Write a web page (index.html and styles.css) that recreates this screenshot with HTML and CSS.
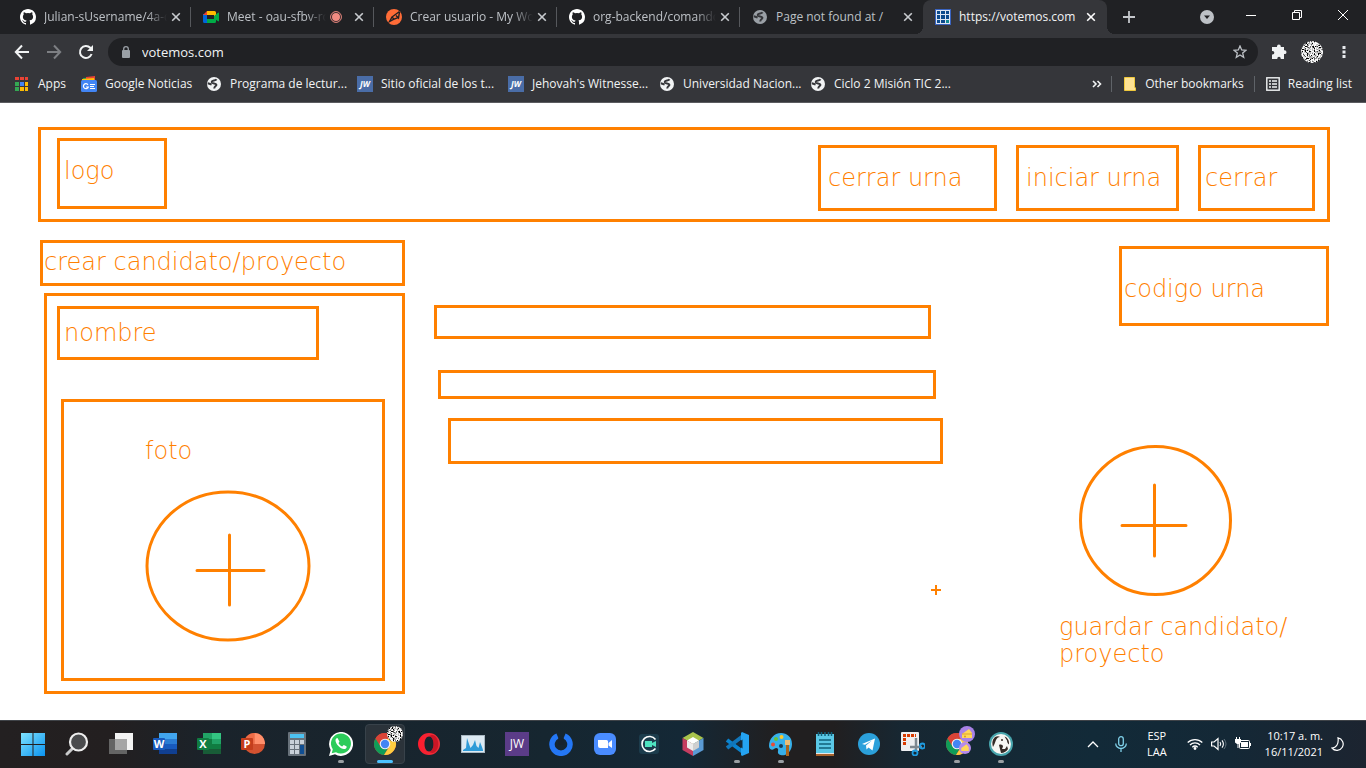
FILE: index.html
```html
<!DOCTYPE html>
<html lang="es">
<head>
<meta charset="utf-8">
<meta name="viewport" content="width=device-width, initial-scale=1">
<title>https://votemos.com</title>
<link rel="stylesheet" href="styles.css">
</head>
<body>
<svg class="defs" aria-hidden="true">
  <defs>
    <filter id="noise" x="0" y="0" width="1" height="1">
      <feTurbulence type="fractalNoise" baseFrequency="0.75" numOctaves="2" seed="4"/>
      <feColorMatrix values="4 0 0 0 -1.4  4 0 0 0 -1.4  4 0 0 0 -1.4  0 0 0 0 1"/>
      <feComposite in2="SourceGraphic" operator="in"/>
    </filter>
    <linearGradient id="winBlue" x1="0" y1="0" x2="1" y2="1"><stop offset="0" stop-color="#7fe3ff"/><stop offset="1" stop-color="#0a93f0"/></linearGradient>
    <linearGradient id="operaRed" x1="0" y1="0" x2="1" y2="0"><stop offset="0" stop-color="#ff1b2d"/><stop offset="1" stop-color="#e8303a"/></linearGradient>
    <symbol id="github" viewBox="0 0 16 16"><path fill="#fff" d="M8 0C3.58 0 0 3.58 0 8c0 3.54 2.29 6.53 5.47 7.59.4.07.55-.17.55-.38v-1.33c-2.23.48-2.7-1.07-2.7-1.07-.36-.92-.89-1.17-.89-1.17-.73-.5.05-.49.05-.49.8.06 1.23.83 1.23.83.71 1.22 1.87.87 2.33.66.07-.52.28-.87.5-1.07-1.77-.2-3.64-.89-3.64-3.95 0-.87.31-1.59.82-2.15-.08-.2-.36-1.01.08-2.12 0 0 .67-.21 2.2.82a7.6 7.6 0 0 1 4 0c1.53-1.04 2.2-.82 2.2-.82.44 1.1.16 1.92.08 2.12.51.56.82 1.27.82 2.15 0 3.07-1.87 3.75-3.65 3.95.29.25.54.73.54 1.48v2.19c0 .21.15.46.55.38A8 8 0 0 0 16 8c0-4.42-3.58-8-8-8z"/></symbol>
    <symbol id="globe" viewBox="0 0 16 16"><circle cx="8" cy="8" r="7" fill="currentColor"/><path class="globe-land" d="M10.500 3.200C9.500 5 5.500 3.800 5.800 6.200 6.200 8 10 6.800 10.400 8.700c.2 1.500-1.900 1.200-2.200 3.800"/><path class="globe-land" d="M1.800 7.200l3.800 1.300"/></symbol>
    <symbol id="jw" viewBox="0 0 16 16"><rect width="16" height="16" fill="#4a6da7"/><text x="8" y="11" text-anchor="middle" class="jw-small">JW</text></symbol>
    <symbol id="close" viewBox="0 0 10 10"><path d="M1.200 1.200l7.600 7.600M8.800 1.200L1.200 8.800" stroke="currentColor" stroke-width="1.600"/></symbol>
    <symbol id="chrome" viewBox="0 0 24 24"><circle cx="12" cy="12" r="11" fill="#db4437"/><path fill="#0f9d58" d="M2.500 6.500A11 11 0 0 0 11 23l5-8.500-4 2-4.500-2z"/><path fill="#ffcd40" d="M12 6.800h9.700A11 11 0 0 1 11 23l5.500-8.500z"/><path fill="#db4437" d="M2.500 6.500A11 11 0 0 1 21.700 6.800H12l-4.700 3z"/><circle cx="12" cy="12" r="5.300" fill="#f1f1f1"/><circle cx="12" cy="12" r="4.200" fill="#4285f4"/></symbol>
  </defs>
</svg>

<header class="browser">
  <div class="tabs">
    <button class="tab"><svg width="16" height="16"><use href="#github"/></svg><span class="tab-title">Julian-sUsername/4a-d</span><svg class="tab-close" width="10" height="10"><use href="#close"/></svg></button>
    <button class="tab"><svg width="16" height="16" viewBox="0 0 16 16"><path fill="#0066da" d="M0 5h4v9H1.500A1.500 1.500 0 0 1 0 12.500z"/><path fill="#e94235" d="M0 6l4-4v4z"/><path fill="#ffba00" d="M4 2h7.500A1.500 1.500 0 0 1 13 3.500V7l-2 1V6H4z"/><path fill="#00ac47" d="M4 10h7V7l4-3.300c.400-.3 1 0 1 .5v7.600c0 .5-.6.800-1 .5l-2-1.600v1.800a1.500 1.500 0 0 1-1.500 1.500H4z"/></svg><span class="tab-title">Meet - oau-sfbv-ro</span><svg class="recording" width="12" height="12" viewBox="0 0 12 12"><circle cx="6" cy="6" r="5.400" fill="none" stroke="#f28b82"/><circle cx="6" cy="6" r="4" fill="#f28b82"/></svg><svg class="tab-close" width="10" height="10"><use href="#close"/></svg></button>
    <button class="tab"><svg width="16" height="16" viewBox="0 0 16 16"><circle cx="8" cy="8" r="8" fill="#ff6c37"/><path d="M13.500 2.500L6 8l2 2.200 4-1.500M6 8l-2.500 4.500L8 10.200M10 6.500L12.500 9l1-6" fill="none" stroke="#202124" stroke-width="1.400"/></svg><span class="tab-title">Crear usuario - My Wo</span><svg class="tab-close" width="10" height="10"><use href="#close"/></svg></button>
    <button class="tab"><svg width="16" height="16"><use href="#github"/></svg><span class="tab-title">org-backend/comando</span><svg class="tab-close" width="10" height="10"><use href="#close"/></svg></button>
    <button class="tab tab-last"><svg class="globe-gray" width="16" height="16"><use href="#globe"/></svg><span class="tab-title">Page not found at /</span><svg class="tab-close" width="10" height="10"><use href="#close"/></svg></button>
    <button class="tab tab-active"><svg width="16" height="16" viewBox="0 0 16 16"><rect x=".5" y=".5" width="15" height="15" fill="#dfe6f2" stroke="#3a64c0"/><path fill="#0c4a8c" d="M2 2h3v3H2zM6 2h4v3H6zM11 2h3v3h-3zM2 6h3v4H2zM6 6h4v4H6zM11 6h3v4h-3zM2 11h3v3H2zM6 11h4v3H6z"/><path fill="#128a94" d="M11 11h3v3h-3z"/></svg><span class="tab-title">https://votemos.com</span><svg class="tab-close" width="10" height="10"><use href="#close"/></svg></button>
    <button class="new-tab" aria-label="New tab"><svg width="12" height="12" viewBox="0 0 12 12"><path d="M6 0v12M0 6h12" stroke="#c4c7cb" stroke-width="1.800"/></svg></button>
    <div class="window-controls">
      <button aria-label="Search tabs"><svg width="14" height="14" viewBox="0 0 14 14"><circle cx="7" cy="7" r="7" fill="#bdc1c6"/><path d="M4 5.500h6L7 9z" fill="#202124"/></svg></button>
      <button aria-label="Minimize"><svg width="10" height="10" viewBox="0 0 10 10"><path d="M0 5.500h10" stroke="#fff"/></svg></button>
      <button aria-label="Restore"><svg width="10" height="10" viewBox="0 0 10 10"><path d="M.5 2.500h7v7h-7zM2.500 2.500v-2h7v7h-2" fill="none" stroke="#fff"/></svg></button>
      <button aria-label="Close"><svg width="10" height="10" viewBox="0 0 10 10"><path d="M0 0l10 10M10 0L0 10" stroke="#fff"/></svg></button>
    </div>
  </div>

  <div class="toolbar">
    <button class="nav-btn" aria-label="Back"><svg width="16" height="16" viewBox="0 0 16 16"><path d="M15 8H2M8 1.500L1.800 8 8 14.500" fill="none" stroke="#f1f3f4" stroke-width="2"/></svg></button>
    <button class="nav-btn" aria-label="Forward"><svg width="16" height="16" viewBox="0 0 16 16"><path d="M1 8h13M8 1.500L14.200 8 8 14.500" fill="none" stroke="#7d7f83" stroke-width="2"/></svg></button>
    <button class="nav-btn" aria-label="Reload"><svg width="16" height="16" viewBox="0 0 16 16"><path d="M13.600 10A6 6 0 1 1 12.300 3.800L14 5.500" fill="none" stroke="#f1f3f4" stroke-width="2"/><path d="M15 1v6H9z" fill="#f1f3f4"/></svg></button>
    <div class="omnibox">
      <svg width="10" height="12" viewBox="0 0 10 12"><rect x="1" y="4" width="8" height="8" rx="1" fill="#9aa0a6"/><path d="M2.700 5V3a2.300 2.300 0 0 1 4.600 0v2" fill="none" stroke="#9aa0a6" stroke-width="1.300"/></svg>
      <input class="address" type="text" value="votemos.com" aria-label="Address">
      <svg width="14" height="14" viewBox="0 0 14 14"><path d="M7 1l1.700 4 4.300.3-3.300 2.800 1 4.200L7 10l-3.700 2.300 1-4.200L1 5.300 5.300 5z" fill="none" stroke="#bdc1c6" stroke-width="1.300"/></svg>
    </div>
    <div class="tools">
      <button aria-label="Extensions"><svg width="16" height="16" viewBox="0 0 16 16"><path fill="#f1f3f4" d="M6 2.500a1.900 1.900 0 0 1 3.800 0V3H13v3.300h.6a1.900 1.900 0 0 1 0 3.800H13V15H9.700v-.6a1.700 1.700 0 0 0-3.400 0v.6H1v-4.500h.6a1.700 1.700 0 0 0 0-3.500H1V3h5z"/></svg></button>
      <button aria-label="Profile"><svg width="22" height="22" viewBox="0 0 22 22"><circle cx="11" cy="11" r="11" filter="url(#noise)"/></svg></button>
      <button aria-label="Menu"><svg width="4" height="14" viewBox="0 0 4 14"><path fill="#e8eaed" d="M.5 1h3v3h-3zM.5 5.500h3v3h-3zM.5 10h3v3h-3z"/></svg></button>
    </div>
  </div>

  <nav class="bookmarks">
    <a class="bookmark bm-apps" href="#"><svg width="16" height="16" viewBox="0 0 16 16"><path fill="#ea4335" d="M1 1h4v3H1zM6 1h4v3H6zM11 1h3v3h-3z"/><path fill="#34a853" d="M1 6h4v4H1zM1 11h4v4H1z"/><path fill="#4285f4" d="M6 6h4v4H6z"/><path fill="#fbbc04" d="M11 6h3v4h-3zM6 11h4v4H6zM11 11h3v4h-3z"/></svg>Apps</a>
    <a class="bookmark bm-news" href="#"><svg width="16" height="16" viewBox="0 0 16 16"><path fill="#0c9d58" d="M2 2l10-1 2 3H2z"/><path fill="#ea4335" d="M5 1l9-1v4H5z"/><path fill="#ffc107" d="M1 3l12-1 1 4H1z"/><rect y="4" width="16" height="12" rx="1.500" fill="#4285f4"/><path d="M7 8.800A2.500 2.500 0 1 0 7.300 11H5M9 8.500h5M9 10.500h4M9 12.500h5" fill="none" stroke="#fff" stroke-width="1.200"/></svg>Google Noticias</a>
    <a class="bookmark" href="#"><svg width="16" height="16"><use href="#globe"/></svg>Programa de lectur...</a>
    <a class="bookmark" href="#"><svg width="16" height="16"><use href="#jw"/></svg>Sitio oficial de los t...</a>
    <a class="bookmark" href="#"><svg width="16" height="16"><use href="#jw"/></svg>Jehovah's Witnesse...</a>
    <a class="bookmark" href="#"><svg width="16" height="16"><use href="#globe"/></svg>Universidad Nacion...</a>
    <a class="bookmark" href="#"><svg width="16" height="16"><use href="#globe"/></svg>Ciclo 2 Misión TIC 2...</a>
    <button class="more" aria-label="More bookmarks"><svg width="10" height="8" viewBox="0 0 10 8"><path d="M1 1l3 3-3 3M5.500 1l3 3-3 3" fill="none" stroke="#f1f3f4" stroke-width="1.600"/></svg></button>
    <a class="bookmark bm-other" href="#"><svg width="14" height="16" viewBox="0 0 14 16"><path fill="#fde293" stroke="#f0c93c" d="M1.500 1.500h10V11l1 1v2.500h-11z"/></svg>Other bookmarks</a>
    <a class="bookmark bm-reading" href="#"><svg width="14" height="14" viewBox="0 0 14 14"><rect x=".8" y=".8" width="12.400" height="12.400" fill="none" stroke="#f1f3f4" stroke-width="1.400"/><path d="M3 4h2M3 7h2M3 10h2M6 4h5M6 7h5M6 10h5" stroke="#f1f3f4" stroke-width="1.600"/></svg>Reading list</a>
  </nav>
</header>

<main class="page">
  <header class="site-header box">
    <a class="logo box" href="#">logo</a>
    <nav class="actions">
      <button class="box btn-end">cerrar urna</button>
      <button class="box btn-start">iniciar urna</button>
      <button class="box btn-exit">cerrar</button>
    </nav>
  </header>
  <div class="columns">
    <section class="create">
      <button class="box create-title">crear candidato/proyecto</button>
      <form class="box create-form">
        <input class="box name" type="text" placeholder="nombre" aria-label="nombre">
        <button class="box photo" type="button">
          <span>foto</span>
          <svg class="sketch" width="166" height="152" viewBox="0 0 166 152"><ellipse cx="83" cy="76" rx="81" ry="74"/><path d="M84.500 45v70M52 80.500h67"/></svg>
        </button>
      </form>
    </section>
    <section class="candidates">
      <div class="box row-one"></div>
      <div class="box row-two"></div>
      <div class="box row-three"></div>
      <svg class="cursor" width="10" height="10" viewBox="0 0 10 10"><path d="M5 0v10M0 5h10"/></svg>
    </section>
    <section class="side">
      <button class="box code">codigo urna</button>
      <button class="save">
        <svg class="sketch" width="153" height="152" viewBox="0 0 153 152"><ellipse cx="76.500" cy="75.500" rx="75" ry="74"/><path d="M75.500 40v71M43 80.500h64"/></svg>
        <span>guardar candidato/<br>proyecto</span>
      </button>
    </section>
  </div>
</main>

<footer class="taskbar">
  <div class="apps">
    <button class="app" aria-label="Inicio"><svg viewBox="0 0 24 24"><path fill="url(#winBlue)" d="M0 1h11.500v11H0zM12.500 1H24v11H12.500zM0 13h11.500v11H0zM12.500 13H24v11H12.500z"/></svg></button>
    <button class="app" aria-label="Buscar"><svg viewBox="0 0 24 24"><path d="M8 16l-6 6" stroke="#c9cacb" stroke-width="3" stroke-linecap="round"/><circle cx="13.500" cy="10" r="8.500" fill="#4a4b4d" stroke="#eee" stroke-width="2.200"/></svg></button>
    <button class="app" aria-label="Vista de tareas"><svg viewBox="0 0 24 24"><rect x="6" y="1" width="18" height="17" fill="#f3f3f3"/><rect y="7" width="18" height="15" fill="#646464"/><rect x="6" y="7" width="12" height="11" fill="#a5a5a5"/></svg></button>
    <button class="app" aria-label="Word"><svg viewBox="0 0 24 24"><path fill="#41a5ee" d="M6 1h18v6H6z"/><path fill="#2b7cd3" d="M6 7h18v5H6z"/><path fill="#185abd" d="M6 12h18v5H6z"/><path fill="#103f91" d="M6 17h18v5H6z"/><rect y="6" width="12" height="12" rx="1" fill="#185abd"/><text x="6" y="16" class="office">W</text></svg></button>
    <button class="app" aria-label="Excel"><svg viewBox="0 0 24 24"><path fill="#21a366" d="M6 1h9v6H6z"/><path fill="#33c481" d="M15 1h9v6h-9z"/><path fill="#107c41" d="M6 7h9v10H6z"/><path fill="#21a366" d="M15 7h9v5h-9z"/><path fill="#107c41" d="M15 12h9v5h-9z"/><path fill="#185c37" d="M6 17h18v5H6z"/><rect y="6" width="12" height="12" rx="1" fill="#107c41"/><text x="6" y="16" class="office">X</text></svg></button>
    <button class="app" aria-label="PowerPoint"><svg viewBox="0 0 24 24"><circle cx="13.500" cy="11.500" r="10.500" fill="#d35230"/><path fill="#ed6c47" d="M13.500 1v11H3A10.500 10.500 0 0 1 13.500 1z"/><path fill="#ff8f6b" d="M13.500 1A10.500 10.500 0 0 1 24 12H13.500z"/><rect y="6" width="12" height="12" rx="1" fill="#c43e1c"/><text x="6" y="16" class="office">P</text></svg></button>
    <button class="app" aria-label="Calculadora"><svg viewBox="0 0 24 24"><rect x="3" width="18" height="24" rx="1" fill="#68727b"/><rect x="5" y="2" width="14" height="4" fill="#4cc2f1"/><path fill="#c9d1d9" d="M5 8h4v4H5zM10 8h4v4h-4zM15 8h4v4h-4zM5 13h4v4H5zM10 13h4v4h-4zM5 18h4v4H5zM10 18h4v4h-4z"/><path fill="#104f93" d="M15 13h4v9h-4z"/></svg></button>
    <button class="app running" aria-label="WhatsApp"><svg viewBox="0 0 24 24"><path fill="#fff" d="M0 24l1.700-6A12 12 0 1 1 6 22.300z"/><path fill="#2ccc5a" d="M2.700 21.300l1.100-4A10 10 0 1 1 7 20.200z"/><path fill="#fff" d="M8.500 6c-1.200 0-2 1-2 2.500 0 3.500 5 8.500 8.500 8.500 1.500 0 2.700-.9 2.700-2.300 0-.500-2.700-1.700-3-1.700l-1.500 1.500c-1.500-.5-3.300-2.300-3.700-3.500l1-1.300z"/></svg></button>
    <button class="app current" aria-label="Chrome"><svg viewBox="0 0 24 24"><use href="#chrome" width="24" height="24"/></svg><svg class="app-badge" viewBox="0 0 16 16"><circle cx="8" cy="8" r="8" filter="url(#noise)"/></svg></button>
    <button class="app" aria-label="Opera"><svg viewBox="0 0 24 24"><path fill="url(#operaRed)" fill-rule="evenodd" d="M12 1a11 11 0 1 0 0 22 11 11 0 0 0 0-22zm0 3.500c2.800 0 4.500 3.300 4.500 7.500s-1.700 7.500-4.500 7.500S7.500 16.200 7.500 12 9.200 4.500 12 4.500z"/><path fill="#a70014" d="M12 4.500c1.500-1.500 4-2 6-.5 4.500 4 4.500 12 0 16-2 1.500-4.500 1-6-.5 2.800 0 4.500-3.300 4.500-7.500S14.800 4.500 12 4.500z" opacity=".5"/></svg></button>
    <button class="app" aria-label="Rendimiento"><svg viewBox="0 0 24 24"><rect x=".5" y="3.500" width="23" height="17" fill="#dceaf3" stroke="#a9b8c2"/><path fill="#2f9bd7" d="M2 18l3-2 1-10 2 6 1.500 4L12 13l2-5 1.500 6 2 2 1.500-6 2 5 1 3v1H2z"/></svg></button>
    <button class="app" aria-label="JW Library"><svg viewBox="0 0 24 24"><rect width="24" height="24" fill="#5b3c88"/><text x="12" y="16" class="jw-large">JW</text></svg></button>
    <button class="app" aria-label="Pomodoro"><svg viewBox="0 0 24 24"><path d="M8.500 4a9 9 0 1 0 7 0" fill="none" stroke="#2477f5" stroke-width="5.500"/><path d="M12 6v7" stroke="#17232d" stroke-width="5"/></svg></button>
    <button class="app" aria-label="Zoom"><svg viewBox="0 0 24 24"><rect x="1" y="1" width="22" height="22" rx="6" fill="#4a8cff"/><path fill="#fff" d="M5 8h8.500A1.500 1.500 0 0 1 15 9.500V16H7a2 2 0 0 1-2-2zM15.500 11L19 8v8l-3.500-2.500z"/></svg></button>
    <button class="app" aria-label="Grabadora"><svg viewBox="0 0 24 24"><rect x="2" y="2" width="20" height="20" rx="3" fill="#1c3c4c"/><path d="M18.500 7.500a7.500 7.500 0 1 0 0 9" fill="none" stroke="#fff" stroke-width="1.600"/><path fill="#4fe3c0" d="M8 9h7v6H8zM15 11l4-2v6l-4-2z"/></svg></button>
    <button class="app" aria-label="NetBeans"><svg viewBox="0 0 24 24"><path fill="#a9c44c" d="M12 0l10.500 6L12 12 1.500 6z"/><path fill="#c53d60" d="M1.500 6L12 12v12L1.500 18z"/><path fill="#5b9bd5" d="M22.500 6L12 12v12l10.500-6z"/><path fill="#fff" d="M12 5l6 3.500L12 12 6 8.500z"/><path fill="#ececec" d="M6 8.500l6 3.500v7l-6-3.500z"/><path fill="#cfcfcf" d="M18 8.500L12 12v7l6-3.500z"/></svg></button>
    <button class="app running" aria-label="Visual Studio Code"><svg viewBox="0 0 24 24"><path d="M2 8l16 12" stroke="#0a84d0" stroke-width="4"/><path d="M2 16L18 4" stroke="#1177bb" stroke-width="4"/><path fill="#24a3f2" d="M17 0l7 3v18l-7 3-1-1V1z"/><path fill="#15293a" d="M17.500 7.500v9L11.500 12z"/></svg></button>
    <button class="app running" aria-label="Paint"><svg viewBox="0 0 24 24"><path fill="#37b0ea" d="M12 1C5 1 0 7 0 14c0 3 3 5 5 3s5-1 4 2c-1 4 4 5 7 4 5-2 7-7 7-11C23 5 18 1 12 1z"/><circle cx="4" cy="12.500" r="2" fill="#e94b35"/><circle cx="7" cy="7" r="2" fill="#67c23a"/><circle cx="12.500" cy="5" r="2" fill="#ffc928"/><circle cx="12" cy="14" r="2" fill="#183a52"/><path fill="#e9bd78" d="M16 8h5v5h-5z"/><path fill="#a9651e" d="M17 13h3v11h-3z"/></svg></button>
    <button class="app" aria-label="Bloc de notas"><svg viewBox="0 0 24 24"><rect x="3" y="2" width="18" height="20" fill="#5ac8e6"/><path fill="#e8e8e8" d="M3 21h18v1H3z"/><path fill="#a8632d" d="M3 22h18v2H3z"/><path d="M5.500 0v4M8.500 0v4M12 0v4M15.500 0v4M18.500 0v4M6 8h12M6 12h12M6 16h12" stroke="#11607b" stroke-width="1.500"/></svg></button>
    <button class="app" aria-label="Telegram"><svg viewBox="0 0 24 24"><circle cx="12" cy="12" r="11" fill="#2ba0da"/><path fill="#fff" d="M5 12l13-5.500-2.500 12-4-3-2 2-.500-4 6-5-7 4.200z"/></svg></button>
    <button class="app" aria-label="Recortes"><svg viewBox="0 0 24 24"><rect width="18" height="19" rx="1" fill="#eef0f2"/><path d="M3.500 13V3.500H15" fill="none" stroke="#d83b01" stroke-width="3" stroke-dasharray="3 1"/><path d="M15 6v14M9 15h12" stroke="#7d8890" stroke-width="2.500"/><circle cx="14" cy="21" r="2.500" fill="none" stroke="#1e9be0" stroke-width="1.800"/><circle cx="21.500" cy="14" r="2.500" fill="none" stroke="#1e9be0" stroke-width="1.800"/></svg></button>
    <button class="app running" aria-label="Chrome, perfil 2"><svg viewBox="0 0 24 24"><use href="#chrome" width="24" height="24"/></svg><svg class="app-badge" viewBox="0 0 16 16"><circle cx="8" cy="8" r="8" fill="#a982e6"/><path fill="#ffd75a" d="M3 8l7-5 3 4v5H3z"/><path d="M3 8h10" stroke="#e0a528"/><circle cx="6" cy="10.500" r="1" fill="#d99a20"/></svg><svg class="app-badge app-badge-low" viewBox="0 0 16 16"><circle cx="8" cy="8" r="8" fill="#b58aec"/><path fill="#ffd75a" d="M3 8l7-5 3 4v5H3z"/></svg></button>
    <button class="app running" aria-label="DBeaver"><svg viewBox="0 0 24 24"><circle cx="12" cy="12" r="12" fill="#48a5ad"/><circle cx="12" cy="12" r="10" fill="#f8f7f4"/><path fill="#342a26" d="M6 5c2-1 4-1 5 0-2 0-3 1-4 3-1 3-2 5-3 7-1-4-1-7 2-10zM15.500 4.500c3 1 5 4 4.500 8-1-1-2-2-2-4zM10 13c2-1 4 0 4 1.500L13 17h3l2-3 1 3c-1 2-4 4-7 4l-1-4z"/><circle cx="13" cy="8" r="1" fill="#342a26"/></svg></button>
  </div>
  <div class="tray">
    <svg width="12" height="8" viewBox="0 0 12 8"><path d="M1 7l5-5 5 5" fill="none" stroke="#fff" stroke-width="1.300"/></svg>
    <svg class="mic" width="12" height="16" viewBox="0 0 12 16"><rect x="3.700" y=".7" width="4.600" height="9" rx="2.300"/><path d="M.7 7.500a5.300 5 0 0 0 10.600 0M6 12.500V16"/></svg>
    <div class="lang">ESP<br>LAA</div>
    <svg width="16" height="12" viewBox="0 0 16 12"><path d="M.7 4.500a10.500 10.500 0 0 1 14.600 0M3 7a7 7 0 0 1 10 0M5.300 9.200a4 4 0 0 1 5.400 0" fill="none" stroke="#fff" stroke-width="1.300"/><circle cx="8" cy="10.500" r="1.400" fill="#fff"/></svg>
    <svg width="16" height="14" viewBox="0 0 16 14"><path d="M.6 5v4h2.500L7 12.500v-11L3.100 5z" fill="none" stroke="#fff" stroke-width="1.200"/><path d="M9 5q1.500 2 0 4M11 3.300q2.800 3.700 0 7.400" fill="none" stroke="#fff" stroke-width="1.100"/><path d="M13 2q4 5 0 10" fill="none" stroke="#60717c"/></svg>
    <svg width="16" height="14" viewBox="0 0 16 14"><rect x="4.500" y="3.500" width="10" height="8" rx="1" fill="none" stroke="#fff"/><path d="M6 5h7v5H6zM15 6h1v3h-1zM0 2h6v3.500L4 7H2L0 5.500zM1 0h1v2H1zM4 0h1v2H4zM2.500 7h1v4h-1z" fill="#fff"/></svg>
    <time class="clock">10:17 a. m.<br>16/11/2021</time>
    <svg width="14" height="14" viewBox="0 0 14 14"><path d="M7 .8a6.300 6.300 0 1 1-6 10.200C5 11 8 7 7 .8z" fill="none" stroke="#fff" stroke-width="1.200"/></svg>
  </div>
</footer>
</body>
</html>
```
FILE: styles.css
```css
* { box-sizing: border-box; }

body {
  margin: 0;
  min-height: 100vh;
  display: flex;
  flex-direction: column;
  background: #fff;
  font: 12px/16px "Open Sans", "Noto Sans", sans-serif;
}

button, input {
  margin: 0;
  padding: 0;
  border: 0;
  background: none;
  color: inherit;
  font: inherit;
  text-align: left;
}

a { color: inherit; text-decoration: none; }
svg { display: block; flex: none; }
.defs { position: absolute; width: 0; height: 0; }

/* Browser chrome */
.browser {
  background: #35363a;
  color: #f1f3f4;
  border-bottom: 1px solid #5b5c60;
}

.tabs {
  display: flex;
  height: 34px;
  padding-left: 8px;
  background: #202124;
}

.tab {
  position: relative;
  display: flex;
  align-items: center;
  gap: 8px;
  flex: 0 1 183px;
  min-width: 0;
  padding: 0 10px 0 12px;
  color: #bdc1c6;
}

.tab::after {
  content: "";
  position: absolute;
  right: 0;
  top: 7px;
  width: 1px;
  height: 20px;
  background: #56585c;
}

.tab-title {
  flex: 1;
  min-width: 0;
  margin-right: -4px;
  overflow: hidden;
  white-space: nowrap;
  mask-image: linear-gradient(to right, #000 calc(100% - 20px), transparent);
}

.tab-close { color: #c8cbcf; }
.tab-last::after { display: none; }
.tab-last .tab-title, .tab-active .tab-title { mask-image: none; }

.tab-active {
  flex-basis: 184px;
  padding-right: 11px;
  background: #35363a;
  color: #f1f3f4;
  border-radius: 8px 8px 0 0;
}

.tab-active .tab-close { color: #fff; }

.tab-active::before, .tab-active::after {
  content: "";
  position: absolute;
  top: auto;
  bottom: 0;
  width: 8px;
  height: 8px;
}

.tab-active::before {
  left: -8px;
  background: radial-gradient(circle at 0 0, #202124 8px, #35363a 8px);
}

.tab-active::after {
  right: -8px;
  background: radial-gradient(circle at 100% 0, #202124 8px, #35363a 8px);
}

.recording { margin-right: 4px; }

.new-tab { padding: 0 16px; }

.window-controls {
  display: flex;
  align-items: center;
  margin-left: auto;
  height: 30px;
}

.window-controls button {
  display: flex;
  justify-content: center;
  width: 46px;
}

.window-controls button:first-child { width: 42px; padding-top: 4px; }

.toolbar {
  display: flex;
  align-items: center;
  height: 36px;
  padding: 0 14px 0 6px;
}

.nav-btn {
  display: flex;
  justify-content: center;
  width: 32px;
}

.omnibox {
  display: flex;
  align-items: center;
  flex: 1;
  gap: 11px;
  height: 28px;
  margin-left: 6px;
  padding: 0 11px 0 13px;
  border-radius: 14px;
  background: #202124;
}

.address { flex: 1; font-size: 13px; }

.tools {
  display: flex;
  align-items: center;
  gap: 14px;
  width: 94px;
  padding-left: 13px;
}

.tools button:last-child { margin-left: 5px; }

.bookmarks {
  display: flex;
  align-items: center;
  height: 32px;
  padding: 0 14px 4px;
}

.bookmark {
  display: flex;
  align-items: center;
  gap: 8px;
  flex: 0 0 151px;
  white-space: nowrap;
}

.bm-apps { flex-basis: 67px; }
.bm-news { flex-basis: 125px; }
.more { margin: 0 9px 0 auto; }

.bm-other, .bm-reading {
  flex: 0 0 auto;
  padding-left: 11px;
  border-left: 1px solid #5f6368;
}

.bm-other { padding-right: 10px; }

.globe-land { fill: none; stroke: #35363a; stroke-width: 2px; }
.globe-gray { color: #9aa0a6; }
.jw-small { font: italic 700 8px "Open Sans", sans-serif; fill: #fff; }

/* Page */
.page {
  flex: 1;
  padding: 24px 36px 26px 38px;
  color: #ff8000;
  font: 200 24px/27px "DejaVu Sans", sans-serif;
}

.box { border: 3px solid #ff8000; }

.site-header {
  display: flex;
  align-items: center;
  justify-content: space-between;
  height: 95px;
  padding: 0 12px 2px 16px;
}

.logo {
  display: flex;
  align-items: center;
  width: 110px;
  height: 71px;
  padding: 0 4px 4px;
}

.actions {
  display: flex;
  align-items: center;
  gap: 19px;
  padding-top: 8px;
}

.actions button { height: 66px; padding: 2px 4px 0; white-space: nowrap; }
.actions .btn-end { width: 179px; padding-left: 7px; }
.actions .btn-start { width: 163px; padding-left: 7px; }
.actions .btn-exit { width: 117px; }

.columns {
  display: grid;
  grid-template-columns: 367px minmax(0, 1fr) 271px;
  column-gap: 29px;
  margin-top: 18px;
}

.create { display: flex; flex-direction: column; gap: 7px; }

.create-title {
  height: 46px;
  margin-left: 2px;
  padding: 0 1px 2px;
  white-space: nowrap;
}

.create-form {
  display: flex;
  flex-direction: column;
  gap: 39px;
  margin-left: 6px;
  padding: 10px;
}

.name { width: 262px; height: 54px; padding: 0 4px; }
.name::placeholder { color: inherit; opacity: 1; }

.photo {
  display: flex;
  flex-direction: column;
  gap: 25px;
  width: 324px;
  height: 282px;
  margin-left: 4px;
  padding: 36px 0 0 81px;
}

.sketch { fill: none; stroke: #ff8000; stroke-width: 3px; stroke-linecap: round; }

.candidates {
  display: flex;
  flex-direction: column;
  padding: 65px 87px 0 0;
}

.row-one { height: 34px; margin-right: 12px; }
.row-two { height: 29px; margin: 31px 7px 0 4px; }
.row-three { height: 46px; margin: 19px 0 0 14px; }

.cursor {
  align-self: flex-end;
  margin: 121px 2px 0 0;
  stroke: #ff8000;
  stroke-width: 2px;
}

.side { display: flex; flex-direction: column; }

.code {
  align-self: flex-end;
  width: 210px;
  height: 80px;
  margin: 6px 1px 0 0;
  padding: 7px 2px 0;
}

.save {
  display: flex;
  flex-direction: column;
  gap: 17px;
  margin-top: 119px;
  white-space: nowrap;
}

.save svg { margin-left: 20px; }

/* Taskbar */
.taskbar {
  display: flex;
  align-items: center;
  justify-content: space-between;
  height: 48px;
  padding: 0 21px 0 11px;
  box-shadow: inset 0 1px #3f4348;
  background: linear-gradient(to right, #232021, #231f20 8%, #1a232b 16%, #162630 40%, #142836 50%, #211f20 57%, #211f20 61%, #172732 66%, #122a38 80%, #142836 90%, #1c2430);
  color: #fff;
}

.apps { display: flex; }

.app {
  position: relative;
  display: flex;
  align-items: center;
  justify-content: center;
  width: 44px;
  height: 40px;
}

.app > svg { width: 24px; height: 24px; }

.app > .app-badge {
  position: absolute;
  top: 2px;
  right: 4px;
  width: 16px;
  height: 16px;
}

.app > .app-badge-low { top: 18px; right: 8px; width: 12px; height: 12px; }

.running::after, .current::after {
  content: "";
  position: absolute;
  bottom: 1px;
  width: 6px;
  height: 3px;
  border-radius: 2px;
  background: #9a9fa3;
}

.current::after { width: 16px; background: #4cc2ff; }

.current::before {
  content: "";
  position: absolute;
  inset: 0 2px;
  border: 1px solid #38424a;
  border-radius: 4px;
  background: #2b333a;
}

.current > svg { position: relative; }

.office { font: 700 11px "Open Sans", sans-serif; fill: #fff; text-anchor: middle; }
.jw-large { font: 400 12px "Open Sans", sans-serif; fill: #fff; text-anchor: middle; }

.tray { display: flex; align-items: center; gap: 8px; }
.tray .mic { margin: 0 12px 0 8px; fill: none; stroke: #7fd0e8; stroke-width: 1.3px; }
.lang { margin-right: 12px; font-size: 11px; text-align: center; }
.clock { margin-left: 6px; font-size: 11px; text-align: right; }
```
